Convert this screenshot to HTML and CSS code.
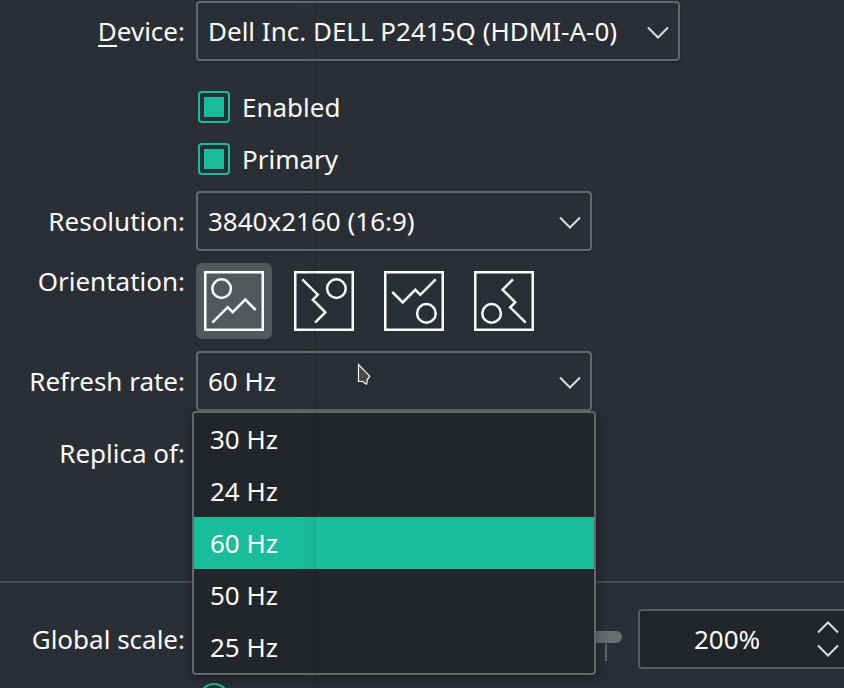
FILE: index.html
```html
<!DOCTYPE html>
<html lang="en">
<head>
<meta charset="utf-8">
<title>Display Configuration</title>
<link rel="stylesheet" href="styles.css">
</head>
<body>
<svg class="defs" width="0" height="0">
  <symbol id="chevron" viewBox="0 0 22 14"><path d="M1 1.5 11 11.5 21 1.5"/></symbol>
  <symbol id="picture" viewBox="0 0 60 60">
    <rect x="1.25" y="1.25" width="57.5" height="57.5"/>
    <circle cx="17.6" cy="17.6" r="9.3"/>
    <path d="M8.3 51.7 23.7 36.2 28.7 41.2 41.3 28.6 51.7 39"/>
  </symbol>
</svg>
<main class="settings">
  <section class="form">
    <label class="label"><span class="mnemonic">D</span>evice:</label>
    <div class="combo wide"><span>Dell Inc. DELL P2415Q (HDMI-A-0)</span><svg class="chevron"><use href="#chevron"/></svg></div>

    <div class="checks">
      <div class="check"><span class="box"></span><span class="text">Enabled</span></div>
      <div class="check"><span class="box"></span><span class="text">Primary</span></div>
    </div>

    <label class="label">Resolution:</label>
    <div class="combo"><span>3840x2160 (16:9)</span><svg class="chevron"><use href="#chevron"/></svg></div>

    <label class="label orientation-label">Orientation:</label>
    <div class="orientations">
      <div class="orientation selected"><svg><use href="#picture"/></svg></div>
      <div class="orientation right"><svg><use href="#picture"/></svg></div>
      <div class="orientation flipped"><svg><use href="#picture"/></svg></div>
      <div class="orientation left"><svg><use href="#picture"/></svg></div>
    </div>

    <label class="label">Refresh rate:</label>
    <div class="combo"><span>60 Hz</span><svg class="chevron"><use href="#chevron"/></svg>
      <ul class="menu">
        <li>30 Hz</li>
        <li>24 Hz</li>
        <li class="active">60 Hz</li>
        <li>50 Hz</li>
        <li>25 Hz</li>
      </ul>
    </div>

    <label class="label replica">Replica of:</label>
  </section>

  <section class="form scale">
    <label class="label">Global scale:</label>
    <div class="scale-row">
      <div class="slider"><div class="groove"></div><div class="tick"></div></div>
      <div class="spin"><span>200%</span>
        <div class="steps"><svg class="chevron up"><use href="#chevron"/></svg><svg class="chevron"><use href="#chevron"/></svg></div>
      </div>
    </div>
    <div class="radio"></div>
  </section>
</main>
<svg class="cursor" viewBox="0 0 14 22"><path d="M1.5 1.5V18.5H5.8L8.8 21H9.8L10.2 16.8 12.8 13.2Z"/></svg>
<div class="seam"></div>
</body>
</html>
```

FILE: styles.css
```css
* { box-sizing: border-box; }
body {
  margin: 0;
  width: 844px;
  height: 688px;
  overflow: hidden;
  background: #2a2e35;
  color: #fcfcfc;
  font: 26px/36px "Noto Sans", sans-serif;
  position: relative;
}
.defs { position: absolute; }
svg { display: block; fill: none; stroke: #fcfcfc; }
.settings { height: 688px; overflow: hidden; padding-top: 1px; }
.form {
  display: grid;
  grid-template-columns: 185px 396px;
  column-gap: 11px;
  row-gap: 12px;
  align-items: center;
}
.label { justify-self: end; white-space: nowrap; }
.mnemonic { display: inline-block; height: 34px; line-height: 36px; border-bottom: 2px solid #fcfcfc; vertical-align: top; }
.combo {
  position: relative;
  display: flex;
  align-items: center;
  justify-content: space-between;
  height: 60px;
  padding: 0 9px 0 10px;
  border: 2px solid #65686b;
  border-radius: 4px;
  box-shadow: 1px 2px 2px rgba(0, 0, 0, .14);
  white-space: nowrap;
}
.combo.wide { width: 484px; }
.chevron { width: 22px; height: 14px; stroke: #dcdedf; stroke-width: 2; }
.combo > .chevron { margin-top: 3px; }
.checks { grid-column: 2; padding: 8px 0 0 2px; margin-bottom: -6px; }
.check { display: flex; align-items: center; gap: 12px; height: 52px; }
.box {
  width: 32px;
  height: 32px;
  border: 2px solid #1abc9c;
  border-radius: 4px;
  background: #1abc9c content-box;
  padding: 4px;
}
.orientation-label { align-self: start; }
.orientations { display: flex; gap: 14px; height: 76px; }
.orientation { width: 76px; height: 76px; padding: 8px; border-radius: 6px; }
.orientation svg { width: 60px; height: 60px; stroke-width: 2.5; }
.selected { background: #53585c; }
.right svg { transform: rotate(90deg); }
.flipped svg { transform: rotate(180deg); }
.left svg { transform: rotate(270deg); }
.replica { height: 36px; margin-top: 12px; }
.menu {
  position: absolute;
  z-index: 2;
  top: 58px;
  left: -6px;
  width: 404px;
  height: 264px;
  margin: 0;
  padding: 0;
  list-style: none;
  background: #222529;
  border: 2px solid #65686b;
  border-radius: 4px;
  box-shadow: 0 4px 12px rgba(0, 0, 0, .35);
}
.menu li { height: 52px; padding: 8px 16px; }
.active { background: #1abc9c; }
.scale { margin-top: 110px; padding-top: 26px; border-top: 2px solid #465050; }
.scale-row { display: flex; width: 668px; align-items: center; }
.slider { flex: none; width: 426px; height: 60px; padding-top: 22px; }
.groove { height: 12px; border-radius: 6px; background: #6a6d70; }
.tick { width: 2px; height: 17px; margin: 1px 0 0 409px; background: #606367; }
.spin {
  flex: none;
  display: flex;
  align-items: center;
  justify-content: space-between;
  width: 226px;
  height: 60px;
  margin-left: 16px;
  padding: 0 23px 0 54px;
  border: 2px solid #595c5e;
  border-radius: 4px;
  background: #222529;
}
.steps { display: grid; gap: 10px; }
.up { transform: scaleY(-1); }
.radio { grid-column: 2; width: 32px; height: 32px; margin: 2px 0 0 2px; border: 2px solid #1abc9c; border-radius: 50%; }
.cursor { position: absolute; left: 357px; top: 363px; width: 14px; height: 22px; fill: #4b4949; stroke-width: 1.2; }
.seam {
  position: absolute;
  z-index: 3;
  top: 0;
  left: 300px;
  width: 16px;
  height: 688px;
  background: linear-gradient(90deg, rgba(42, 46, 40, 0), rgba(42, 46, 40, .07));
  border-right: 1px solid rgba(0, 0, 0, .1);
}
```
